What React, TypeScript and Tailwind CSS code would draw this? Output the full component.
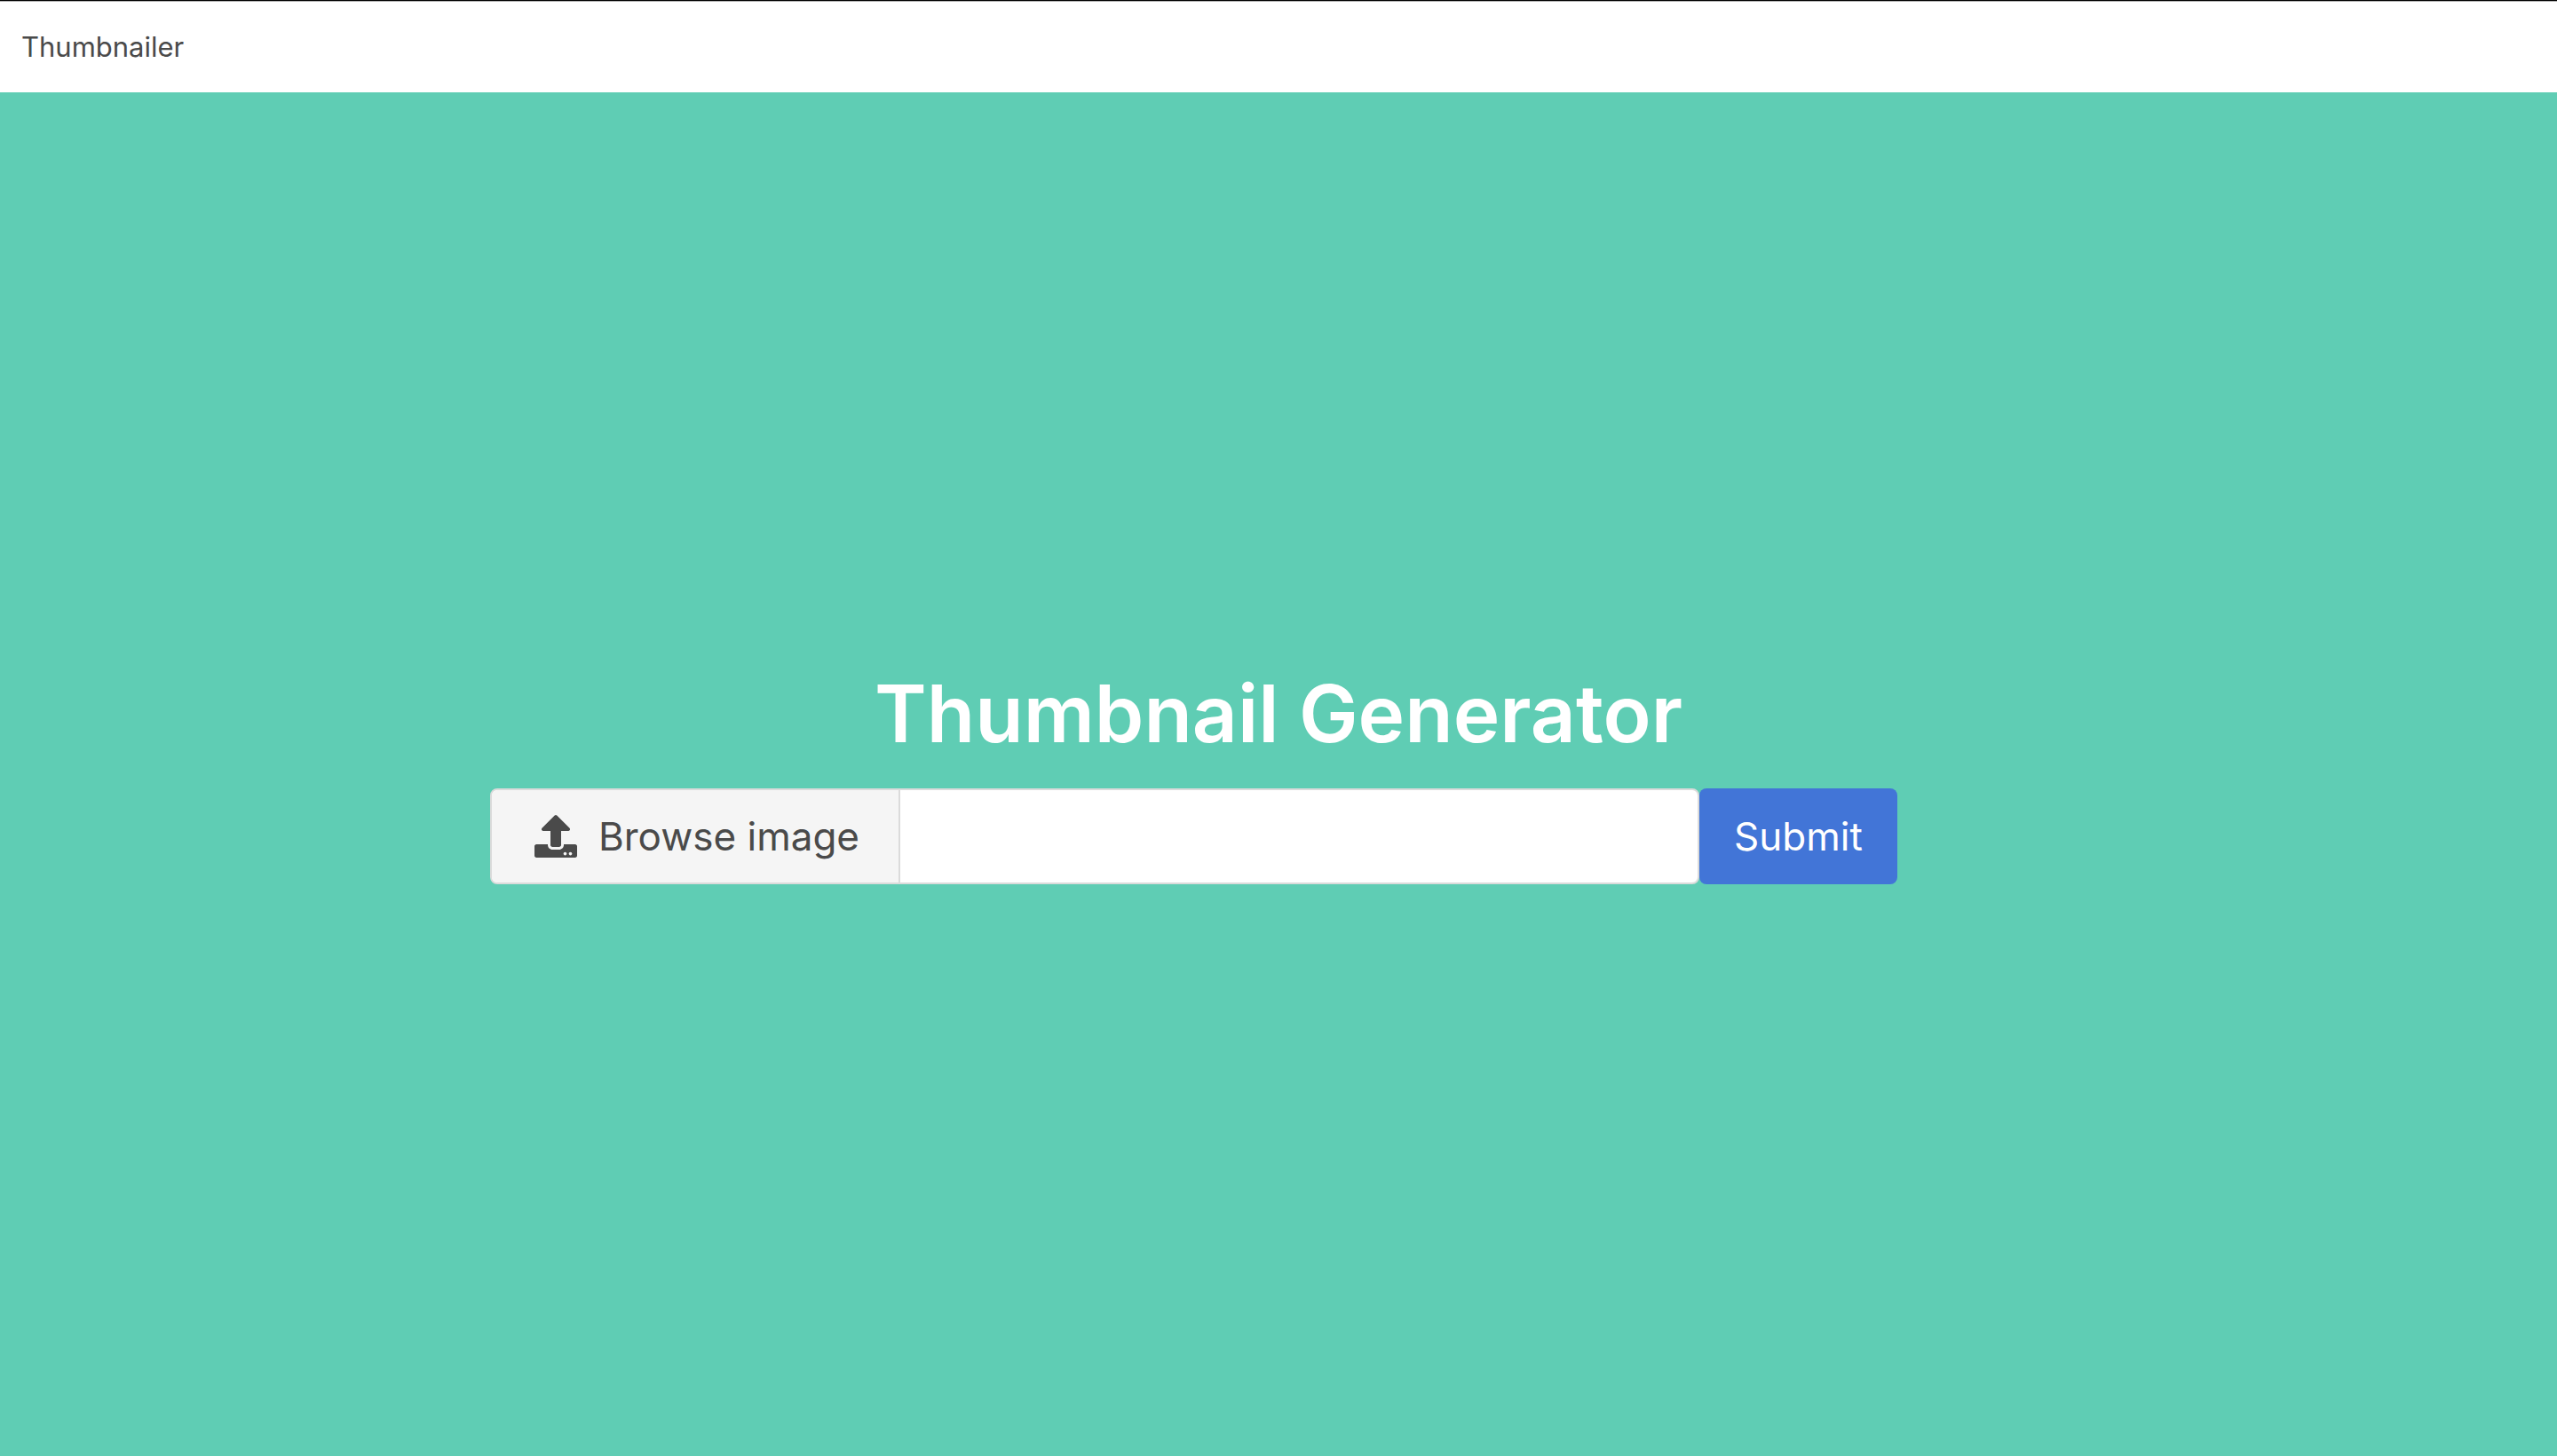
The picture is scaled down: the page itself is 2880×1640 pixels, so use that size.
import { useState } from "react";
import { FaUpload } from "react-icons/fa";

export default function App() {
  const [fileName, setFileName] = useState("");

  return (
    <div className="flex min-h-screen flex-col bg-[#5fcdb4] font-['Inter',sans-serif] text-[#4a4a4a]">
      <nav className="flex h-[104px] items-center border-t border-black bg-white px-6 shadow-[inset_0_1px_0_#b0b0b0]">
        <a href="#" className="text-[31px] leading-12">
          Thumbnailer
        </a>
      </nav>

      <main className="flex grow flex-col items-center justify-center px-12">
        <h1 className="mb-7 text-center text-[89px] leading-28 font-semibold text-white">
          Thumbnail Generator
        </h1>
        <form
          className="flex w-full max-w-[1776px] text-[44px]"
          onSubmit={(event) => event.preventDefault()}
        >
          <label className="flex h-[108px] w-full max-w-[1362px] cursor-pointer overflow-hidden rounded-lg border-2 border-[#dbdbdb] bg-white">
            <input
              type="file"
              accept="image/*"
              className="sr-only"
              onChange={(event) => setFileName(event.target.files?.[0]?.name ?? "")}
            />
            <span className="flex w-[460px] shrink-0 items-center gap-6 border-r-2 border-[#dbdbdb] bg-[#f5f5f5] pl-12 whitespace-nowrap">
              <FaUpload className="size-12" aria-hidden="true" />
              Browse image
            </span>
            <span className="flex min-w-0 grow items-center truncate px-8">{fileName}</span>
          </label>
          <button
            type="submit"
            className="h-[108px] w-[223px] shrink-0 cursor-pointer rounded-lg bg-[#4275d7] text-center text-white"
          >
            Submit
          </button>
        </form>
      </main>
    </div>
  );
}
